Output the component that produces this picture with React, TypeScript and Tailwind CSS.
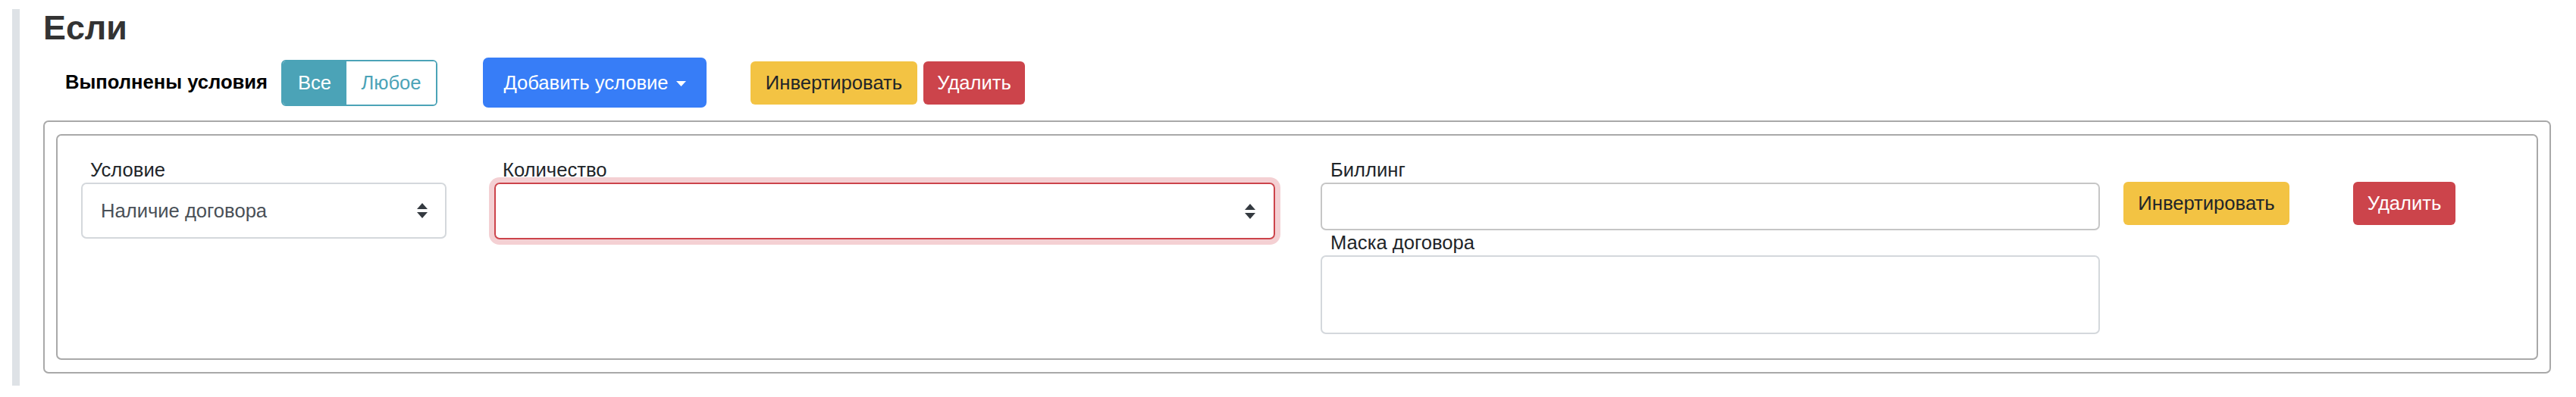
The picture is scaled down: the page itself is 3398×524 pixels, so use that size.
import React from "react";

const Arrows = () => (
  <svg width="16" height="20" viewBox="0 0 16 20" className="shrink-0">
    <path d="M8 0 L15 8 L1 8 Z" fill="#343a40" />
    <path d="M1 12 L15 12 L8 20 Z" fill="#343a40" />
  </svg>
);

export default function App() {
  return (
    <div
      className="w-[3398px] h-[524px] bg-white pt-[12px] pl-[16px] text-[#212529]"
      style={{ fontFamily: '"Liberation Sans", Arial, Helvetica, sans-serif' }}
    >
      <div className="border-l-[10px] border-[#dee2e6] pl-[31px] pr-[33px] pb-[16px]">
        <h3 className="text-[44.8px] font-bold leading-[48px] text-[#333333]">Если</h3>

        <div className="mt-[16px] h-[66px] flex items-center pl-[29px]">
          <span className="w-[285px] text-[25.6px] font-bold text-black leading-none">Выполнены условия</span>
          <div className="flex h-[61px] rounded-[6px] border-2 border-[#4ba3b7] overflow-hidden">
            <div className="w-[84px] bg-[#4ba3b7] text-white text-[25.6px] flex items-center justify-center">Все</div>
            <div className="w-[118px] bg-white text-[#4ba3b7] text-[25.6px] flex items-center justify-center">Любое</div>
          </div>
          <button className="ml-[60px] w-[295px] h-[66px] rounded-[7px] bg-[#377df7] text-white text-[25.6px] flex items-center justify-center gap-[10px]">
            <span>Добавить условие</span>
            <svg width="13" height="7" viewBox="0 0 13 7" className="mt-[2px]">
              <path d="M0 0 L13 0 L6.5 7 Z" fill="#ffffff" />
            </svg>
          </button>
          <button className="ml-[58px] w-[220px] h-[57px] rounded-[6px] bg-[#f3c343] text-[#212529] text-[25.6px] flex items-center justify-center">
            Инвертировать
          </button>
          <button className="ml-[8px] w-[134px] h-[57px] rounded-[6px] bg-[#cc444b] text-white text-[25.6px] flex items-center justify-center">
            Удалить
          </button>
        </div>

        <div className="mt-[17px] border-2 border-[#a9a9a9] rounded-[7px] px-[15px] py-[16px]">
          <div className="border-2 border-[#a9a9a9] rounded-[7px] pl-[31px] pt-[28px] pb-[32px] flex items-start">
            <div className="w-[482px] flex flex-col">
              <label className="ml-[12px] text-[25.6px] leading-[34px]">Условие</label>
              <div className="h-[74px] rounded-[7px] border-2 border-[#d4d8dc] flex items-center justify-between pl-[24px] pr-[22px] text-[25.6px] text-[#495057]">
                <span>Наличие договора</span>
                <Arrows />
              </div>
            </div>

            <div className="ml-[63px] w-[1030px] flex flex-col">
              <label className="ml-[11px] text-[25.6px] leading-[34px]">Количество</label>
              <div className="h-[75px] rounded-[7px] border-2 border-[#cc444b] shadow-[0_0_0_7px_#f4d0d3] flex items-center justify-end pr-[23px]">
                <Arrows />
              </div>
            </div>

            <div className="ml-[60px] w-[1028px] flex flex-col">
              <label className="ml-[13px] text-[25.6px] leading-[34px]">Биллинг</label>
              <div className="h-[63px] rounded-[7px] border-2 border-[#c6c6c6]" />
              <label className="ml-[13px] text-[25.6px] leading-[33px]">Маска договора</label>
              <div className="h-[104px] rounded-[7px] border-2 border-[#d4d8dc]" />
            </div>

            <button className="ml-[31px] mt-[33px] w-[219px] h-[57px] rounded-[6px] bg-[#f3c343] text-[#212529] text-[25.6px] flex items-center justify-center">
              Инвертировать
            </button>
            <button className="ml-[84px] mt-[33px] w-[135px] h-[57px] rounded-[6px] bg-[#cc444b] text-white text-[25.6px] flex items-center justify-center">
              Удалить
            </button>
          </div>
        </div>
      </div>
    </div>
  );
}
